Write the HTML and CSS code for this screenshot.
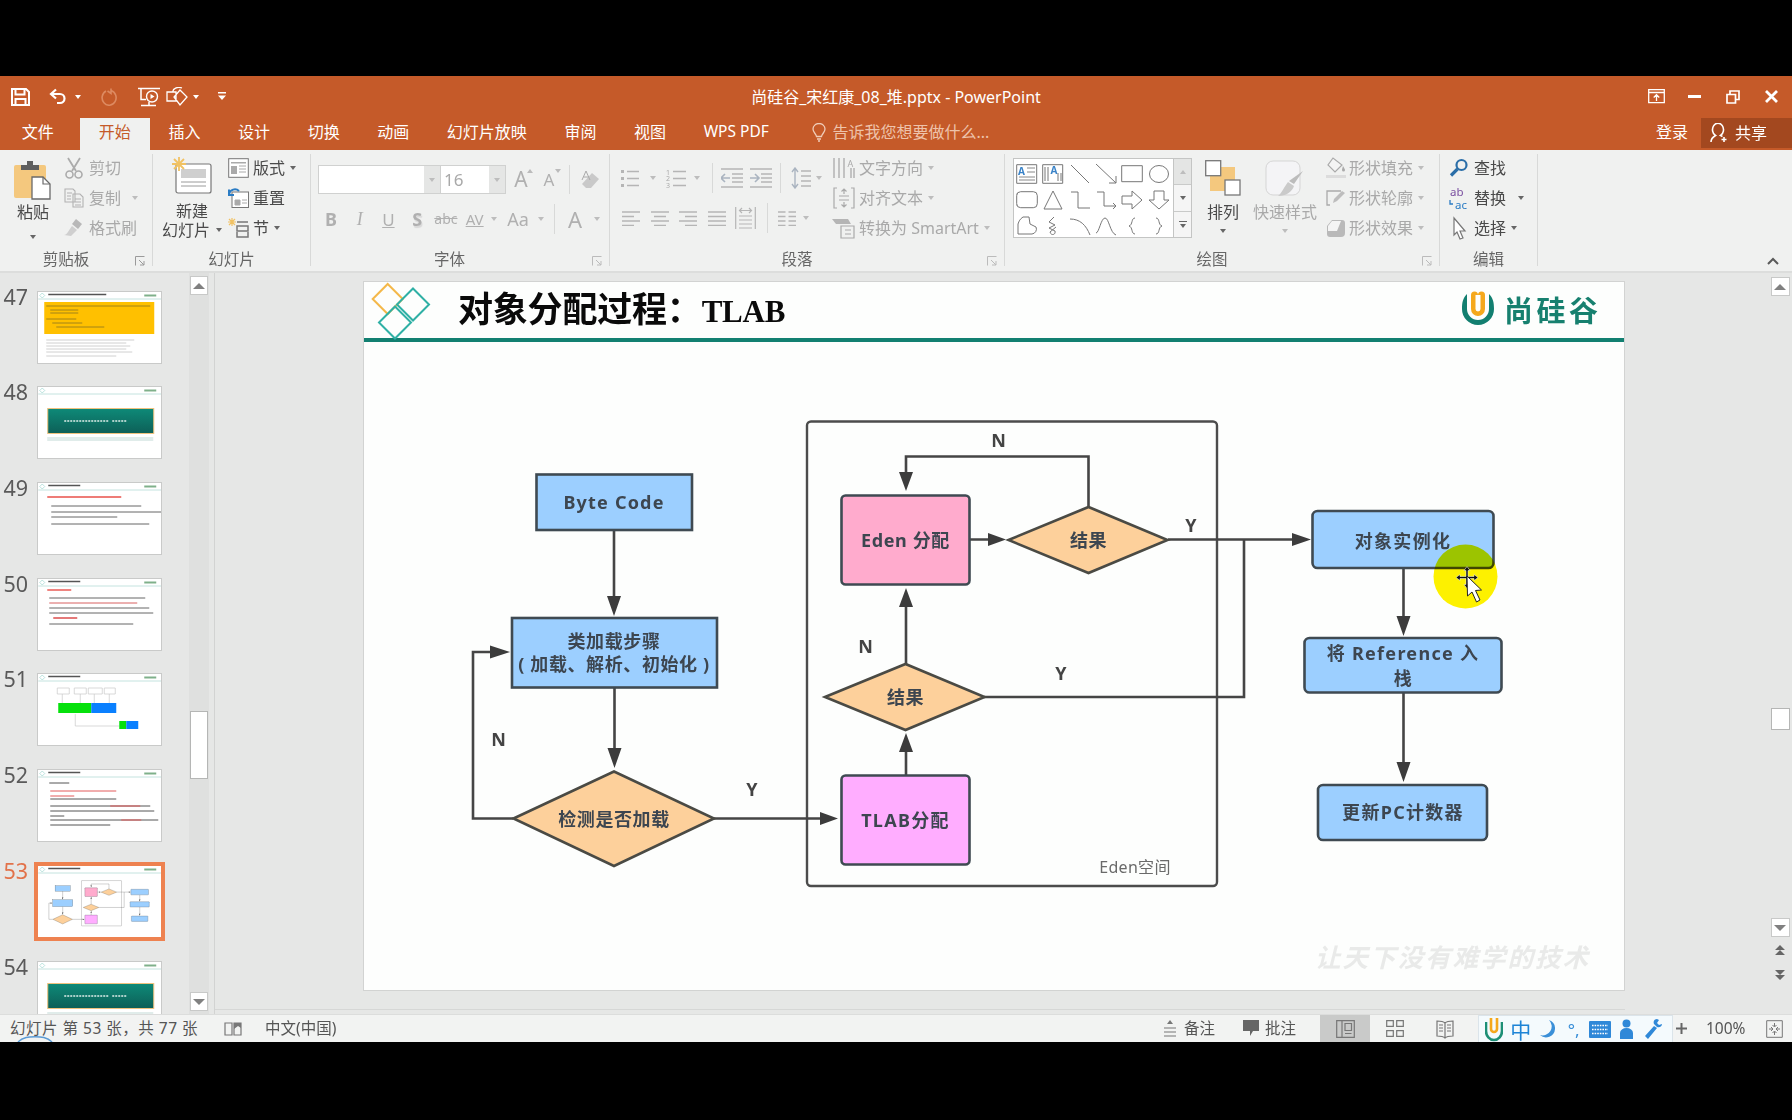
FILE: index.html
```html
<!DOCTYPE html>
<html lang="zh-CN">
<head>
<meta charset="utf-8">
<title>尚硅谷_宋红康_08_堆.pptx - PowerPoint</title>
<link rel="stylesheet" href="styles.css">
</head>
<body>
<div class="letterbox-top"></div>
<main class="app">
  <header class="titlebar">
    <div class="qat">
      <svg class="q-save" width="19" height="18" viewBox="0 0 19 18"><path d="M1 1h14l3 3v13H1zM4.500 1v5.500h9V1M4.500 17v-6h10v6" fill="none" stroke="#fff" stroke-width="2"/></svg>
      <svg class="q-undo" width="18" height="17" viewBox="0 0 18 17"><path d="M7 1.500 2 6l5 4.500M2.500 6H11a4.500 4.500 0 0 1 0 9H8" fill="none" stroke="#fff" stroke-width="2.200"/></svg>
      <span class="caret caret-white q-undo-caret"></span>
      <svg class="q-redo" width="17" height="18" viewBox="0 0 17 18"><path d="M10 2.500a7 7.500 0 1 1-5 .5M10 .5v5L6.500 3" fill="none" stroke="#dd8a61" stroke-width="1.600"/></svg>
      <svg class="q-show" width="22" height="20" viewBox="0 0 22 20"><path d="M0 1.500h22M3 1.500v11h5M3 18.500h15M11 15v3.500" fill="none" stroke="#fff" stroke-width="1.500"/><circle cx="14" cy="9.500" r="5.500" fill="none" stroke="#fff" stroke-width="1.400"/><path d="M12.500 7v5l4-2.500z" fill="#fff"/></svg>
      <svg class="q-shape" width="24" height="20" viewBox="0 0 24 20"><path d="M1 5h9v9H1zM14 3l7 7-7 8-6-8zM7 5a6 4 0 0 1 9-4" fill="none" stroke="#fff" stroke-width="1.300"/></svg>
      <span class="caret caret-white q-shape-caret"></span>
      <svg class="q-custom" width="8" height="11" viewBox="0 0 8 11"><path d="M0 1h8v1.500H0zM0 4.500h8L4 9z" fill="#fff"/></svg>
    </div>
    <div class="doc-title">尚硅谷_宋红康_08_堆.pptx - PowerPoint</div>
    <div class="win-controls">
      <span class="win-btn"><svg width="17" height="15" viewBox="0 0 17 15"><path d="M.7.700h15.600v13H.7zM.7 3.500h15.600M8.500 12V6M5.700 8.500l2.800-2.800 2.800 2.800" fill="none" stroke="#fff" stroke-width="1.300"/></svg></span>
      <span class="win-btn"><svg width="13" height="3" viewBox="0 0 13 3"><path d="M0 0h13v3H0z" fill="#fff"/></svg></span>
      <span class="win-btn"><svg width="14" height="14" viewBox="0 0 14 14"><path d="M1 4.500h8.500V13H1zM4 4.500V1h9v8.500H9.500" fill="none" stroke="#fff" stroke-width="1.700"/></svg></span>
      <span class="win-btn"><svg width="13" height="13" viewBox="0 0 13 13"><path d="m1 1 11 11M12 1 1 12" fill="none" stroke="#fff" stroke-width="2.800"/></svg></span>
    </div>
  </header>

  <nav class="tabs">
    <span class="tab tab-file">文件</span>
    <span class="tab tab-active">开始</span>
    <span class="tab">插入</span>
    <span class="tab">设计</span>
    <span class="tab">切换</span>
    <span class="tab">动画</span>
    <span class="tab">幻灯片放映</span>
    <span class="tab">审阅</span>
    <span class="tab">视图</span>
    <span class="tab tab-wps">WPS PDF</span>
    <span class="tell-me">
      <svg width="14" height="19" viewBox="0 0 14 19"><path d="M4.500 13.500C4 10.500 1 9.500 1 6a6 5.500 0 0 1 12 0c0 3.500-3 4.500-3.500 7.500zM5 16h4M6 18h2" fill="none" stroke="#f0cdb9" stroke-width="1.300"/></svg>
      告诉我您想要做什么...
    </span>
    <span class="login">登录</span>
    <span class="share">
      <svg width="18" height="20" viewBox="0 0 18 20"><path d="M1 19c0-4 2-5 4.500-6.500a5.500 6.500 0 1 1 5 0l2 1M14 14v5M11.500 16.500h5" fill="none" stroke="#fff" stroke-width="1.600"/></svg>
      共享
    </span>
  </nav>

  <section class="ribbon">
    <div class="group group-clip">
      <div class="group-body">
        <div class="bigbtn bigbtn-paste">
          <svg class="big-ico" width="38" height="40" viewBox="0 0 38 40"><rect x="0" y="5" width="32" height="33" rx="2" fill="#f4c87e"/><path d="M7 5h6V1h6v4h6v5H7z" fill="#5f5f5f"/><path d="M18 17h11l7 7v15H18z" fill="#fff" stroke="#6a6a6a" stroke-width="1.300"/><path d="M29 17v7h7" fill="none" stroke="#6a6a6a" stroke-width="1.200"/></svg>
          <span class="big-label">粘贴</span>
          <span class="caret caret-dark big-caret"></span>
        </div>
        <div class="smallcol smallcol-clip">
          <div class="smallbtn off"><svg class="ico" width="20" height="22" viewBox="0 0 20 22"><path d="m4 1 8 13M16 1 8 14" fill="none" stroke="#ababab" stroke-width="1.800"/><circle cx="5.500" cy="17.500" r="3.500" fill="none" stroke="#ababab" stroke-width="1.600"/><circle cx="14.500" cy="17.500" r="3.500" fill="none" stroke="#ababab" stroke-width="1.600"/></svg>剪切</div>
          <div class="smallbtn off"><svg class="ico" width="20" height="20" viewBox="0 0 20 20"><path d="M1 1h8l2 2v11H1zM9 6h7l3 3v10H9zM3 5h5M3 8h4M3 11h4M11 11h6M11 14h6M11 17h6" fill="none" stroke="#b2b2b2" stroke-width="1.100"/></svg>复制<span class="caret caret-off copy-caret"></span></div>
          <div class="smallbtn off"><svg class="ico" width="20" height="20" viewBox="0 0 20 20"><path d="m12 1 6 5-4 5-6-5z" fill="#b8b8b8"/><path d="m8 8 5 4-6 6-7-1c3 0 5-5 8-9z" fill="#cfcfcf"/></svg>格式刷</div>
        </div>
      </div>
      <div class="group-label"><span>剪贴板</span><svg class="launcher" width="10" height="10" viewBox="0 0 10 10"><path d="M.5 9.500V.5h9M4 4l5 5M9 5v4H5" fill="none" stroke="#9a9a9a"/></svg></div>
    </div>

    <div class="group group-slides">
      <div class="group-body">
        <div class="bigbtn bigbtn-new">
          <svg class="big-ico" width="40" height="37" viewBox="0 0 40 37"><rect x="4" y="7" width="35" height="29" rx="2" fill="#fff" stroke="#777" stroke-width="1.200"/><rect x="9" y="12" width="25" height="9" fill="#cfcfcf"/><path d="M9 25h25M9 29h25" stroke="#9a9a9a"/><path d="M7 0v14M0 7h14M2 2l10 10M12 2 2 12" stroke="#f1c263" stroke-width="1.800"/></svg>
          <span class="big-label">新建</span>
          <span class="big-label big-label-two">幻灯片<span class="caret caret-dark inline-caret"></span></span>
        </div>
        <div class="smallcol smallcol-slides">
          <div class="smallbtn"><svg class="ico" width="21" height="20" viewBox="0 0 21 20"><rect x=".7" y=".7" width="19.600" height="18.600" fill="#fff" stroke="#777"/><path d="M3 4h15v1.500H3zM3 8h6v8H3z" fill="#aaa"/><path d="M11 8h7M11 11h7M11 14h7" stroke="#aaa"/></svg>版式<span class="caret caret-dark"></span></div>
          <div class="smallbtn"><svg class="ico" width="21" height="20" viewBox="0 0 21 20"><rect x="4" y="4" width="16.500" height="15.500" fill="#fff" stroke="#777"/><path d="M7 12h5v5H7zM14 12h5M14 15h5" fill="#aaa" stroke="#aaa"/><path d="M1 6a6 6 0 0 1 10-3M1 1.500V7h5" fill="none" stroke="#2b7cc4" stroke-width="2"/></svg>重置</div>
          <div class="smallbtn"><svg class="ico" width="21" height="20" viewBox="0 0 21 20"><path d="M9 4h11M9 8h11v5H9zM9 14v5h11v-5" fill="none" stroke="#777" stroke-width="1.500"/><path d="M4 0v8M0 4h8M1 1l6 6M7 1 1 7" stroke="#f1c263" stroke-width="1.200"/></svg>节<span class="caret caret-dark"></span></div>
        </div>
      </div>
      <div class="group-label"><span>幻灯片</span></div>
    </div>

    <div class="group group-font">
      <div class="group-body group-body-col">
        <div class="font-row1">
          <div class="combo combo-font"><span class="combo-drop"><span class="caret caret-off"></span></span></div>
          <div class="combo combo-size"><span class="combo-val">16</span><span class="combo-drop"><span class="caret caret-off"></span></span></div>
          <span class="cell c28 fontsize fs-up">A</span>
          <span class="cell c28 fontsize fs-down">A</span>
          <span class="vsep sep-font1"></span>
          <span class="cell c28"><svg width="20" height="20" viewBox="0 0 20 20"><path d="M2 14 12 3l7 6-8 9H6z" fill="#c9c9c9"/><path d="M6 1 2 10M6 1l4 9M3.500 7h5" fill="none" stroke="#aaa"/></svg></span>
        </div>
        <div class="font-row2">
          <span class="cell c29 tb">B</span>
          <span class="cell c29 ti">I</span>
          <span class="cell c29 tu">U</span>
          <span class="cell c29 ts">S</span>
          <span class="cell c29 tabc">abc</span>
          <span class="cell c29 tav">AV</span>
          <span class="cell c9"><span class="caret caret-off"></span></span>
          <span class="cell c40 taa">Aa</span>
          <span class="cell c6"><span class="caret caret-off"></span></span>
          <span class="vsep sep-font2"></span>
          <span class="cell c30 tA">A</span>
          <span class="cell c14"><span class="caret caret-off"></span></span>
        </div>
      </div>
      <div class="group-label"><span>字体</span><svg class="launcher" width="10" height="10" viewBox="0 0 10 10"><path d="M.5 9.500V.5h9M4 4l5 5M9 5v4H5" fill="none" stroke="#bbb"/></svg></div>
    </div>

    <div class="group group-para">
      <div class="group-body">
        <div class="para-left">
          <div class="para-row1">
            <span class="cell c24"><svg width="18" height="20" viewBox="0 0 18 20"><path d="M0 2h3v3H0zM0 9h3v3H0zM0 16h3v3H0z" fill="#b5b5b5"/><path d="M6 3.500h12M6 10.500h12M6 17.500h12" stroke="#b5b5b5" stroke-width="1.300"/></svg></span>
            <span class="cell c22"><span class="caret caret-off"></span></span>
            <span class="cell c24"><svg class="ico-open" width="20" height="20" viewBox="0 0 20 20"><text x="0" y="6.500" class="num-ico">1</text><text x="0" y="13" class="num-ico">2</text><text x="0" y="19.500" class="num-ico">3</text><path d="M7 3.500h13M7 10.500h13M7 17.500h13" stroke="#b5b5b5" stroke-width="1.300"/></svg></span>
            <span class="cell c18"><span class="caret caret-off"></span></span>
            <span class="vsep sep-p1"></span>
            <span class="cell c24 ml7"><svg width="22" height="20" viewBox="0 0 22 20"><path d="M0 1h22M11 6h11M11 10h11M11 14h11M0 19h22" stroke="#b5b5b5" stroke-width="1.300"/><path d="M0 10h9M4 6l-4 4 4 4" fill="none" stroke="#aab4c0" stroke-width="1.600"/></svg></span>
            <span class="cell c24 ml5"><svg width="22" height="20" viewBox="0 0 22 20"><path d="M0 1h22M11 6h11M11 10h11M11 14h11M0 19h22" stroke="#b5b5b5" stroke-width="1.300"/><path d="M0 10h9M5 6l4 4-4 4" fill="none" stroke="#aab4c0" stroke-width="1.600"/></svg></span>
            <span class="vsep sep-p2"></span>
            <span class="cell c24 ml8"><svg width="20" height="22" viewBox="0 0 20 22"><path d="M4 1v20M1 5l3-4 3 4M1 17l3 4 3-4" fill="none" stroke="#aab4c0" stroke-width="1.400"/><path d="M10 4h10M10 9h10M10 14h10M10 19h10" stroke="#b5b5b5" stroke-width="1.300"/></svg></span>
            <span class="cell c12"><span class="caret caret-off"></span></span>
          </div>
          <div class="para-row2">
            <span class="cell c29"><svg width="18" height="15" viewBox="0 0 18 15"><path d="M0 1h18M0 5.500h12M0 10h18M0 14.500h12" stroke="#b5b5b5" stroke-width="1.300"/></svg></span>
            <span class="cell c29"><svg width="18" height="15" viewBox="0 0 18 15"><path d="M0 1h18M3 5.500h12M0 10h18M3 14.500h12" stroke="#b5b5b5" stroke-width="1.300"/></svg></span>
            <span class="cell c29"><svg width="18" height="15" viewBox="0 0 18 15"><path d="M0 1h18M6 5.500h12M0 10h18M6 14.500h12" stroke="#b5b5b5" stroke-width="1.300"/></svg></span>
            <span class="cell c29"><svg width="18" height="15" viewBox="0 0 18 15"><path d="M0 1h18M0 5.500h18M0 10h18M0 14.500h18" stroke="#b5b5b5" stroke-width="1.300"/></svg></span>
            <span class="cell c29"><svg width="21" height="24" viewBox="0 0 21 24"><path d="M.7 1v22M20.300 1v22M4 10h13M4 14h13M4 18h13M4 22h13M5 4.500h11M7 2 4.500 4.500 7 7M14 2l2.500 2.500L14 7" fill="none" stroke="#b5b5b5" stroke-width="1.200"/></svg></span>
            <span class="vsep sep-p3"></span>
            <span class="cell c24 ml7"><svg width="18" height="15" viewBox="0 0 18 15"><path d="M0 1h7.500M0 5.500h7.500M0 10h7.500M0 14.500h7.500M10.500 1H18M10.500 5.500H18M10.500 10H18M10.500 14.500H18" stroke="#b5b5b5" stroke-width="1.300"/></svg></span>
            <span class="cell c14"><span class="caret caret-off"></span></span>
          </div>
        </div>
        <div class="smallcol">
          <div class="smallbtn off"><svg class="ico" width="24" height="22" viewBox="0 0 24 22"><path d="M2 1v20M7 1v20M12 1v20M19 11v10M22 11v10" stroke="#aaa" stroke-width="1.300"/><text x="15.500" y="9.500" class="a-ico">A</text></svg>文字方向<span class="caret caret-off"></span></div>
          <div class="smallbtn off"><svg class="ico" width="24" height="22" viewBox="0 0 24 22"><path d="M5 1H2v20h3M19 1h3v20h-3M7 9h10M7 13h10M12 2v5M9.500 4.500 12 2l2.500 2.500M12 15v5M9.500 17.500 12 20l2.500-2.500" fill="none" stroke="#aaa" stroke-width="1.200"/></svg>对齐文本<span class="caret caret-off"></span></div>
          <div class="smallbtn off"><svg class="ico" width="24" height="22" viewBox="0 0 24 22"><path d="M0 2h16l3 5H4z" fill="#b5b5b5"/><path d="M9 9h13v12H9zM13 13h6M13 17h6" fill="none" stroke="#aaa" stroke-width="1.200"/></svg>转换为 SmartArt<span class="caret caret-off"></span></div>
        </div>
      </div>
      <div class="group-label"><span>段落</span><svg class="launcher" width="10" height="10" viewBox="0 0 10 10"><path d="M.5 9.500V.5h9M4 4l5 5M9 5v4H5" fill="none" stroke="#bbb"/></svg></div>
    </div>

    <div class="group group-draw">
      <div class="group-body">
        <div class="gallery">
          <div class="gallery-grid">
            <svg viewBox="0 0 22 20"><path d="M.7.700h20v18.600H.7z" fill="none" stroke="#777"/><text x="2" y="11" class="a-blue">A</text><path d="M11 4h8M11 8h8M3 13h16M3 16h16" stroke="#888"/></svg>
            <svg viewBox="0 0 22 20"><path d="M.7.700h20v18.600H.7zM3 3v14M6 3v14M16 9v8M19 9v8" fill="none" stroke="#777"/><text x="8.500" y="10" class="a-blue">A</text></svg>
            <svg viewBox="0 0 22 20"><path d="M2 1l18 18" stroke="#777"/></svg>
            <svg viewBox="0 0 22 20"><path d="M1 0l20 19M21 12v7h-7" fill="none" stroke="#777"/></svg>
            <svg viewBox="0 0 22 20"><path d="M.7 1.700h20.600v16H.7z" fill="none" stroke="#777"/></svg>
            <svg viewBox="0 0 22 20"><ellipse cx="11" cy="10" rx="9.500" ry="8.500" fill="none" stroke="#777"/></svg>
            <svg viewBox="0 0 22 20"><rect x=".7" y="1.700" width="20.600" height="16" rx="4" fill="none" stroke="#777"/></svg>
            <svg viewBox="0 0 22 20"><path d="M11 1 20 19H2z" fill="none" stroke="#777"/></svg>
            <svg viewBox="0 0 22 20"><path d="M2 2h7v16h12" fill="none" stroke="#777"/></svg>
            <svg viewBox="0 0 22 20"><path d="M2 2h7v14h12M18 13l3 3-3 3" fill="none" stroke="#777"/></svg>
            <svg viewBox="0 0 22 20"><path d="M1 6h10V1l10 9-10 9v-5H1z" fill="none" stroke="#777"/></svg>
            <svg viewBox="0 0 22 20"><path d="M6 1h10v9h5L11 19 1 10h5z" fill="none" stroke="#777"/></svg>
            <svg viewBox="0 0 22 20"><path d="M7 1c-3 2-4 4-5 7v10h14a5 5 0 0 0 4-7l-6-3-1-7z" fill="none" stroke="#777"/></svg>
            <svg viewBox="0 0 22 20"><path d="M12 1 7 6l6 3-6 3 6 3c1 4-4 5-5 1l6-5" fill="none" stroke="#777"/></svg>
            <svg viewBox="0 0 22 20"><path d="M1 3c10 0 16 6 20 16" fill="none" stroke="#777"/></svg>
            <svg viewBox="0 0 22 20"><path d="M1 17c3 0 5-15 9-15s5 15 11 17" fill="none" stroke="#777"/></svg>
            <svg viewBox="0 0 22 20"><path d="M14 2c-4 0-2 7-6 8 4 1 2 8 6 8" fill="none" stroke="#777"/></svg>
            <svg viewBox="0 0 22 20"><path d="M8 2c4 0 2 7 6 8-4 1-2 8-6 8" fill="none" stroke="#777"/></svg>
          </div>
          <div class="gallery-scroll">
            <span class="gs gs-up"><span class="caret caret-off caret-up"></span></span>
            <span class="gs"><span class="caret caret-dark"></span></span>
            <span class="gs gs-more"><span class="gs-bar"></span><span class="caret caret-dark"></span></span>
          </div>
        </div>
        <div class="bigbtn bigbtn-arrange">
          <svg class="big-ico" width="36" height="36" viewBox="0 0 36 36"><rect x="5" y="7" width="25" height="24" fill="#f4c87e"/><rect x=".7" y=".7" width="15" height="15" fill="#fff" stroke="#777" stroke-width="1.300"/><rect x="20" y="20" width="15" height="15" fill="#fff" stroke="#777" stroke-width="1.300"/></svg>
          <span class="big-label">排列</span>
          <span class="caret caret-dark big-caret"></span>
        </div>
        <div class="bigbtn bigbtn-style off">
          <svg class="big-ico" width="40" height="38" viewBox="0 0 40 38"><rect x="1" y="1" width="34" height="34" rx="7" fill="#f4f4f6" stroke="#d5d5d5"/><path d="M38 11 29 24l-5-3z" fill="#bcbcbc"/><path d="m23 22 6 4c-2 6-8 10-16 10 4-3 6-9 10-14z" fill="#cacaca"/></svg>
          <span class="big-label">快速样式</span>
          <span class="caret caret-off big-caret"></span>
        </div>
        <div class="smallcol smallcol-shape">
          <div class="smallbtn off"><svg class="ico" width="20" height="22" viewBox="0 0 20 22"><path d="M7 1 2 8l7 7 7-7z" fill="#f4f4f4" stroke="#aaa" stroke-width="1.200"/><path d="M17 9c1 2 2 3 2 4a1.500 1.500 0 0 1-3 0c0-1 .5-2 1-4z" fill="#aaa"/><path d="M0 18h20v3H0z" fill="#dcdcdc"/></svg>形状填充<span class="caret caret-off"></span></div>
          <div class="smallbtn off"><svg class="ico" width="20" height="20" viewBox="0 0 20 20"><path d="M15 3H1v14h3" fill="none" stroke="#aaa" stroke-width="1.300"/><path d="m16 3 3 2-8 8-4 2 1-4z" fill="#bdbdbd"/></svg>形状轮廓<span class="caret caret-off"></span></div>
          <div class="smallbtn off"><svg class="ico" width="20" height="20" viewBox="0 0 20 20"><path d="M6 2h10a3 3 0 0 1 3 3v10a4 4 0 0 1-4 4H4a3 3 0 0 1-3-3v-8z" fill="#b9b9b9"/><path d="M6 3h9l-4 10H2V8z" fill="#f4f4f4"/></svg>形状效果<span class="caret caret-off"></span></div>
        </div>
      </div>
      <div class="group-label"><span>绘图</span><svg class="launcher" width="10" height="10" viewBox="0 0 10 10"><path d="M.5 9.500V.5h9M4 4l5 5M9 5v4H5" fill="none" stroke="#bbb"/></svg></div>
    </div>

    <div class="group group-edit">
      <div class="group-body">
        <div class="smallcol">
          <div class="smallbtn"><svg class="ico" width="20" height="20" viewBox="0 0 20 20"><circle cx="12.500" cy="7" r="5" fill="none" stroke="#2b6ea8" stroke-width="2.200"/><path d="M8.500 11 2 17.500" stroke="#2b6ea8" stroke-width="3.200"/></svg>查找</div>
          <div class="smallbtn"><svg class="ico" width="20" height="24" viewBox="0 0 20 24"><text x="1" y="10" class="ab-ico">ab</text><text x="6" y="23" class="ac-ico">ac</text><path d="M1 14v4h3" fill="none" stroke="#2b7cc4" stroke-width="1.300"/></svg>替换<span class="caret caret-dark rep-caret"></span></div>
          <div class="smallbtn"><svg class="ico" width="20" height="22" viewBox="0 0 20 22"><path d="m5 1 11 13h-5l3 7-3 1-3-7-3 3z" fill="#fff" stroke="#777" stroke-width="1.200"/></svg>选择<span class="caret caret-dark"></span></div>
        </div>
      </div>
      <div class="group-label"><span>编辑</span></div>
    </div>
    <svg class="collapse" width="12" height="8" viewBox="0 0 12 8"><path d="m1 7 5-5 5 5" fill="none" stroke="#5a5a5a" stroke-width="2"/></svg>
  </section>

  <section class="workspace">
    <aside class="pane">
      <div class="thumb-list">
        <div class="thumb-row"><span class="num">47</span>
          <svg class="thumb" viewBox="0 0 123 71"><use href="#thumb-head"/><path d="M10 2.500h58" stroke="#555" stroke-width="1.500"/><rect x="6" y="10" width="110" height="32" fill="#ffc000"/><path d="M8 14h104M12 18h28M12 21h28M8 27h30M14 31h30M18 35h48" stroke="#8a7420" stroke-width=".8"/><path d="M8 48h88M8 51h80M8 54h84M8 57h80M8 60h86M8 64h70" stroke="#c4c4c4" stroke-width=".8"/></svg></div>
        <div class="thumb-row"><span class="num">48</span>
          <svg class="thumb" viewBox="0 0 123 71"><use href="#thumb-head"/><use href="#teal-card"/></svg></div>
        <div class="thumb-row"><span class="num">49</span>
          <svg class="thumb" viewBox="0 0 123 71"><use href="#thumb-head"/><path d="M10 2.500h32" stroke="#555" stroke-width="1.500"/><path d="M9 14h74" stroke="#e9504a" stroke-width="1.400"/><path d="M13 23h90M13 29h110M13 34h66M13 41h98" stroke="#666" stroke-width="1"/></svg></div>
        <div class="thumb-row"><span class="num">50</span>
          <svg class="thumb" viewBox="0 0 123 71"><use href="#thumb-head"/><path d="M10 2.500h32" stroke="#555" stroke-width="1.500"/><path d="M9 11h24" stroke="#e9504a" stroke-width="1.400"/><path d="M11 19h96M11 29h100M11 34h104M11 45h84" stroke="#666" stroke-width="1"/><path d="M11 24h88" stroke="#d86060" stroke-width="1"/><path d="M15 39h24" stroke="#d84040" stroke-width="1.400"/></svg></div>
        <div class="thumb-row"><span class="num">51</span>
          <svg class="thumb" viewBox="0 0 123 71"><use href="#thumb-head"/><path d="M10 2.500h32" stroke="#555" stroke-width="1.500"/><path d="M19 14h12v6H19zM36 14h12v6H36zM50 14h14v6H50zM66 14h11v6H66zM24 20v9M42 20v9M56 20v9M71 20v9M37 40v12h44" fill="none" stroke="#c8c8c8" stroke-width=".7"/><rect x="20" y="29" width="33" height="10" fill="#06e10c"/><rect x="53" y="29" width="25" height="10" fill="#0a80ff"/><rect x="81" y="47" width="7" height="8" fill="#06e10c"/><rect x="88" y="47" width="12" height="8" fill="#0a80ff"/></svg></div>
        <div class="thumb-row"><span class="num">52</span>
          <svg class="thumb" viewBox="0 0 123 71"><use href="#thumb-head"/><path d="M10 2.500h32" stroke="#555" stroke-width="1.500"/><path d="M11 13h20M12 29h66M12 36h100M12 41h104M12 46h14M12 50h108M12 55h60" stroke="#555" stroke-width="1"/><path d="M12 21h66M12 26h24M72 36h30M83 50h20" stroke="#e25a5a" stroke-width="1"/></svg></div>
        <div class="thumb-row thumb-row-on"><span class="num">53</span>
          <svg class="thumb thumb-on" viewBox="0 0 123 71"><use href="#thumb-head"/><path d="M10 2.500h32" stroke="#555" stroke-width="1.500"/><svg x="0" y="0" width="123" height="71" viewBox="364 282 1260 708"><use href="#flow-shapes"/></svg></svg></div>
        <div class="thumb-row"><span class="num">54</span>
          <svg class="thumb" viewBox="0 0 123 71"><use href="#thumb-head"/><use href="#teal-card"/></svg></div>
      </div>
      <div class="pane-scroll">
        <span class="sbtn sbtn-up"><span class="caret caret-grey caret-up"></span></span>
        <span class="sthumb"></span>
        <span class="sbtn sbtn-down"><span class="caret caret-grey"></span></span>
      </div>
      <svg class="defs" width="0" height="0" aria-hidden="true">
        <defs>
          <linearGradient id="teal" x1="0" y1="0" x2="0" y2="1"><stop offset="0" stop-color="#0e8a78"/><stop offset="1" stop-color="#0d5f57"/></linearGradient>
          <g id="thumb-head">
            <path d="m4 1 2.500 2.500L4 6 1.500 3.500z" fill="none" stroke="#8fd0c8" stroke-width=".6"/>
            <path d="M0 7h123" stroke="#c4e3df" stroke-width="1"/>
            <path d="M106 3.500h12" stroke="#7fb08a" stroke-width="2"/>
          </g>
          <g id="teal-card">
            <rect x="9" y="50" width="106" height="4" fill="#e0ecea"/>
            <rect x="9.500" y="21.500" width="106" height="25" fill="url(#teal)" stroke="#eec27e"/>
            <path d="M26 34h44M74 34h14" stroke="#dfeeea" stroke-width="1.300" stroke-dasharray="2 1"/>
          </g>
        </defs>
      </svg>
    </aside>

    <div class="stage">
      <article class="slide">
        <header class="slide-head">
          <svg class="slide-mark" width="60" height="60" viewBox="0 0 60 60"><path d="m22.700 2 15 15-15 15-15-15z" fill="none" stroke="#f4b84a" stroke-width="2"/><path d="m48 6.500 16 16-16 16-16-16zM30 24.500l16 16-16 16-16-16z" fill="none" stroke="#2fb0a5" stroke-width="2"/></svg>
          <h1 class="slide-title">对象分配过程<span class="slide-title-colon">：</span><span class="slide-title-en">TLAB</span></h1>
          <div class="brand">
            <svg width="36" height="36" viewBox="0 0 36 36"><path d="M2 18a16 16 0 0 0 32 0c0-7-1-11-5-15v15a11 11 0 0 1-22 0V3C3 7 2 11 2 18z" fill="#127f70"/><path d="M11 4a3.500 3.500 0 0 1 7 0v14h0V4a3.500 3.500 0 0 1 7 0v14a7 7 0 0 1-14 0zM15.500 4v14a2.500 2.500 0 0 0 5 0V4z" fill="#f5a81c" fill-rule="evenodd"/></svg>
            <span class="brand-text">尚硅谷</span>
          </div>
        </header>
        <div class="slide-canvas">
          <svg class="flow" width="1260" height="648" viewBox="364 342 1260 648">
            <g id="flow-shapes">
              <rect class="outer" x="807" y="421.500" width="410" height="464.500" rx="4"/>
              <g class="wire">
                <path d="M614 530v70M614.500 687v68M513 818.500H473V652h20M713 818.500H824M906 664v-60M906 775v-26M1088.500 507v-50.500H906v20M969 539.500h20M1168 539.500h125M984 697h260V540M1403.500 568v50M1403.500 692v74"/>
              </g>
              <g class="head">
                <path d="m614 616-7-20h14zM614.500 768l-7-20h14zM510 652l-20-6.500v13zM838 818.500l-18-6.500v13zM906 588l-7 19h14zM906 733l-7 19h14zM906 491l-7-19h14zM1006 539.500l-18-6.500v13zM1311 539.500l-19-6.500v13zM1403.500 636l-7-20h14zM1403.500 782l-7-20h14z"/>
              </g>
              <rect class="box blue" x="536.500" y="474.500" width="155.500" height="55.500"/>
              <rect class="box blue" x="512" y="618" width="205" height="69.500"/>
              <path class="box peach" d="M513.500 818.500 614 771.500l100 47-100 47.500z"/>
              <rect class="box pink" x="841.500" y="495.500" width="128" height="89" rx="4"/>
              <rect class="box lilac" x="841.500" y="775.500" width="128" height="89" rx="4"/>
              <path class="box peach" d="M825 697l80.500-33 79 33-79 33z"/>
              <path class="box peach" d="M1008.500 540l80-33 79 33-79 33z"/>
              <rect class="box blue" x="1312.500" y="511" width="181" height="57" rx="5"/>
              <rect class="box blue" x="1304.500" y="638" width="197" height="54.500" rx="5"/>
              <rect class="box blue" x="1318" y="785" width="169" height="55" rx="5"/>
            </g>
            <g class="labels">
              <text x="614" y="502">Byte Code</text>
              <text class="cjk" x="614" y="641">类加载步骤</text>
              <text class="cjk" x="614" y="664">( 加载、解析、初始化 )</text>
              <text class="cjk" x="614" y="819">检测是否加载</text>
              <text class="cjk" x="905.500" y="540">Eden 分配</text>
              <text class="cjk wide" x="905.500" y="820">TLAB分配</text>
              <text class="cjk" x="905.500" y="697">结果</text>
              <text class="cjk" x="1088.500" y="540">结果</text>
              <text class="cjk wide" x="1403" y="541">对象实例化</text>
              <text class="cjk wide" x="1403" y="653">将 Reference 入</text>
              <text class="cjk" x="1403" y="678">栈</text>
              <text class="cjk wide" x="1403" y="812">更新PC计数器</text>
              <text class="mark" x="498.500" y="739">N</text>
              <text class="mark" x="752" y="789">Y</text>
              <text class="mark" x="998.500" y="440">N</text>
              <text class="mark" x="865.500" y="646">N</text>
              <text class="mark" x="1191" y="525">Y</text>
              <text class="mark" x="1061" y="673">Y</text>
              <text class="eden" x="1135" y="867">Eden空间</text>
            </g>
            <circle class="spot" cx="1465.500" cy="576.500" r="32"/>
            <g class="pointer">
              <path class="move" d="M1467 566.500l-3 4h2v6h-6v-2l-4 3 4 3v-2h6v6h-2l3 4 3-4h-2v-6h6v2l4-3-4-3v2h-6v-6h2z"/>
              <path class="arrow" d="m1467 576 .5 20 4.500-4 4.500 10 3.500-2-4.500-9.500 6-.5z"/>
            </g>
          </svg>
          <div class="watermark">让天下没有难学的技术</div>
        </div>
      </article>
      <div class="stage-rule"></div>
    </div>

    <div class="vscroll">
      <span class="sbtn sbtn-up"><span class="caret caret-grey caret-up"></span></span>
      <span class="sthumb sthumb-main"></span>
      <span class="sbtn sbtn-down2"><span class="caret caret-grey"></span></span>
      <svg class="page-prev" width="10" height="11" viewBox="0 0 10 11"><path d="M5 0 10 5H0zM5 5l5 5H0z" fill="#666"/></svg>
      <svg class="page-next" width="10" height="11" viewBox="0 0 10 11"><path d="M5 11 0 6h10zM5 6 0 1h10z" fill="#666"/></svg>
    </div>
  </section>

  <footer class="status">
    <span class="st-count">幻灯片 第 53 张，共 77 张</span>
    <svg class="st-proof" width="18" height="16" viewBox="0 0 18 16"><path d="M1 2h7v12H1zM10 2h7v12h-7z" fill="none" stroke="#777" stroke-width="1.200"/><path d="M10 2h7v5l-3-2-4 3z" fill="#777"/></svg>
    <span class="st-lang">中文(中国)</span>
    <div class="st-right">
      <span class="st-btn st-notes"><svg width="14" height="18" viewBox="0 0 14 18"><path d="M7 0 10 4H4z" fill="#777"/><path d="M1 8h12M1 12h12M1 16h12" stroke="#777" stroke-width="1.200"/></svg>备注</span>
      <span class="st-btn st-comments"><svg width="16" height="17" viewBox="0 0 16 17"><path d="M0 0h16v11h-6l-3 5v-5H0z" fill="#666"/></svg>批注</span>
      <span class="view view-on"><svg width="19" height="18" viewBox="0 0 19 18"><path d="M.7.700h17.600v16.600H.7zM6 .7v16.600M9 3.500h6.500v7H9zM9 13.500h6.500" fill="none" stroke="#777" stroke-width="1.200"/></svg></span>
      <span class="view view-grid"><svg width="18" height="17" viewBox="0 0 18 17"><path d="M.7.700h6.600v5.600H.7zM10.700.7h6.600v5.600h-6.600zM.7 10.700h6.600v5.600H.7zM10.700 10.700h6.600v5.600h-6.600z" fill="none" stroke="#777" stroke-width="1.200"/></svg></span>
      <span class="view view-read"><svg width="18" height="20" viewBox="0 0 18 20"><path d="M1 2c3 0 6 0 8 2 2-2 5-2 8-2v15c-3 0-6 0-8 2-2-2-5-2-8-2zM9 4v15M3 6h4M3 9h4M3 12h4M11 6h4M11 9h4M11 12h4" fill="none" stroke="#777" stroke-width="1.200"/></svg></span>
      <div class="ime">
        <span class="ime-cell"><svg width="18" height="26" viewBox="0 0 18 26"><path d="M1 6v9a8 9 0 0 0 16 0V6" fill="none" stroke="#1d8f76" stroke-width="2.600"/><path d="M6 2v11a3 3 0 0 0 6 0V2" fill="none" stroke="#f5a81c" stroke-width="2.600"/></svg></span>
        <span class="ime-cell ime-zh">中</span>
        <span class="ime-cell"><svg width="16" height="18" viewBox="0 0 16 18"><path d="M10 0a9 9 0 0 1-9 15 9 9 0 0 0 15-6 9 9 0 0 0-6-9z" fill="#3a8fd8"/></svg></span>
        <span class="ime-cell ime-punct">°,</span>
        <span class="ime-cell"><svg width="22" height="17" viewBox="0 0 22 17"><rect width="22" height="17" rx="1" fill="#2f88d8"/><path d="M3 4.500h16M3 8.500h16M3 12.500h16" stroke="#fff" stroke-width="1.600" stroke-dasharray="1.600 1"/></svg></span>
        <span class="ime-cell"><svg width="15" height="20" viewBox="0 0 15 20"><circle cx="7.500" cy="4.500" r="4" fill="#2f88d8"/><path d="M1 20v-6a6.500 5 0 0 1 13 0v6z" fill="#2f88d8"/></svg></span>
        <span class="ime-cell"><svg width="17" height="20" viewBox="0 0 17 20"><path d="M12 0c-3 0-4 3-3 5l3 3c3 1 5-1 5-3l-3 1-2-2 2-3zM9 7l3 2-9 11-3-3z" fill="#2f88d8"/></svg></span>
      </div>
      <svg class="st-plus" width="11" height="11" viewBox="0 0 11 11"><path d="M5.500 0v11M0 5.500h11" stroke="#666" stroke-width="2"/></svg>
      <span class="st-zoom">100%</span>
      <svg class="st-fit" width="17" height="18" viewBox="0 0 17 18"><path d="M.7.700h15.600v16.600H.7zM8.500 3v3.500M6.500 5 8.500 7l2-2M8.500 15v-3.500M6.500 13l2-2 2 2M3 9h3M5 7l2 2-2 2M14 9h-3M12 7l-2 2 2 2" fill="none" stroke="#777" stroke-width="1"/></svg>
    </div>
    <svg class="st-arc" width="36" height="6" viewBox="0 0 36 6"><path d="M1 6C6 1 12 .8 18 .8S30 1 35 6" fill="none" stroke="#5b9bd5" stroke-width="1.500"/></svg>
  </footer>
</main>
</body>
</html>
```
FILE: styles.css
```css
* { box-sizing: border-box; }
html, body { margin: 0; padding: 0; }
body {
  width: 1792px;
  height: 1120px;
  overflow: hidden;
  background: #000;
  font-family: "Noto Sans", "Noto Sans CJK SC", sans-serif;
  font-size: 16px;
  line-height: 1;
  color: #4a4a4a;
}
svg { display: block; flex: none; }
.letterbox-top { height: 76px; }
.app { height: 966px; display: flex; flex-direction: column; position: relative; filter: blur(.35px); }

/* carets */
.caret { display: inline-block; width: 0; height: 0; border-left: 3.500px solid transparent; border-right: 3.500px solid transparent; border-top: 4px solid #666; flex: none; }
.caret-white { border-top-color: #fff; }
.caret-dark { border-top-color: #666; }
.caret-off { border-top-color: #bdbdbd; }
.caret-grey { border-left-width: 6px; border-right-width: 6px; border-top: 6px solid #808080; }
.caret-up { transform: rotate(180deg); }

/* title bar */
.titlebar { height: 42px; background: #c55a29; display: grid; grid-template-columns: 1fr auto 1fr; align-items: center; color: #fff; padding-bottom: 1px; }
.qat { display: flex; align-items: center; padding-left: 11px; }
.q-undo { margin-left: 19px; }
.q-undo-caret { margin-left: 8px; }
.q-redo { margin-left: 20px; }
.q-show { margin-left: 20px; }
.q-shape { margin-left: 6px; }
.q-shape-caret { margin-left: 3px; }
.q-custom { margin-left: 19px; }
.doc-title { font-size: 16px; color: #fff; }
.win-controls { display: flex; justify-content: flex-end; padding-right: 1px; }
.win-btn { width: 38.500px; display: flex; justify-content: center; align-items: center; }

/* tabs */
.tabs { height: 32px; background: #c55a29; display: flex; align-items: stretch; padding-left: 3px; color: #fff; font-size: 16px; }
.tab { padding: 0 18.800px 4px; display: flex; align-items: center; }
.tab-file { margin-right: 7.400px; }
.tab-active { background: #f0f1f0; color: #c55a29; }
.tab-wps { font-size: 15.500px; }
.tell-me { display: flex; align-items: center; gap: 7px; margin-left: 24px; color: #eec3ab; padding-bottom: 4px; font-size: 16px; }
.login { margin-left: auto; margin-right: 13px; display: flex; align-items: center; padding-bottom: 4px; }
.share { width: 91px; height: 30px; background: #a3481f; display: flex; align-items: center; gap: 7px; padding-left: 9px; }

/* ribbon */
.ribbon { height: 123px; background: #f0f1f0; border-bottom: 2px solid #dcdddc; display: flex; padding-top: 4px; position: relative; }
.group { height: 112px; display: flex; flex-direction: column; border-right: 1px solid #d8d9d8; flex: none; }
.group-clip { width: 153px; }
.group-slides { width: 158px; padding-left: 7px; }
.group-font { width: 299px; padding-left: 7px; }
.group-para { width: 395px; padding-left: 8px; }
.group-draw { width: 435px; padding-left: 8px; }
.group-edit { width: 98px; padding-left: 9px; }
.group-body { height: 90px; display: flex; }
.group-body-col { flex-direction: column; }
.group-label { height: 22px; padding-top: 8px; line-height: 14px; display: flex; align-items: center; color: #666; font-size: 15.500px; }
.group-label span { flex: 1; text-align: center; }
.group-slides .group-label span { margin-left: -7px; }
.group-edit .group-label span { margin-left: -9px; }
.group-font .group-label span, .group-para .group-label span, .group-draw .group-label span { margin-left: -8px; }
.launcher { margin: 4px 7px 0 3px; }
.bigbtn { display: flex; flex-direction: column; align-items: center; color: #4a4a4a; }
.big-ico { margin-top: 6px; }
.big-label { line-height: 20px; font-size: 16px; white-space: nowrap; }
.big-label-two { display: flex; align-items: center; gap: 4px; }
.inline-caret { margin-left: 2px; }
.big-caret { margin-top: 9px; }
.bigbtn-paste { width: 50px; margin-left: 8px; }
.bigbtn-paste .big-label { margin-top: 0; line-height: 24px; }
.bigbtn-paste .big-caret { margin-top: 11px; }
.bigbtn-new { width: 64px; }
.bigbtn-new .big-ico { margin-top: 3px; }
.bigbtn-new .big-label { margin-top: 7px; line-height: 20px; }
.bigbtn-new .big-label-two { margin: -1px -5px 0; }
.bigbtn-arrange { width: 50px; margin-left: 6px; }
.bigbtn-style { width: 72px; margin-left: 1px; color: #a9a9a9; }
.bigbtn-arrange .big-label, .bigbtn-style .big-label { margin-top: 6px; line-height: 20px; }
.bigbtn-style .big-ico { margin-bottom: -2px; }
.bigbtn-arrange .big-caret, .bigbtn-style .big-caret { margin-top: 7px; }
.smallcol { display: flex; flex-direction: column; margin-top: -1px; }
.smallcol-clip { margin-left: 6px; }
.smallcol-slides { margin-left: 4px; }
.smallcol-shape { margin-left: 5px; }
.smallbtn { height: 30px; display: flex; align-items: center; white-space: nowrap; font-size: 16px; color: #4a4a4a; }
.smallbtn .ico { margin-right: 4px; overflow: visible; }
.smallbtn .caret { margin-left: 5px; }
.smallcol-clip .ico { margin-right: 5px; }
.group-edit .ico { margin-right: 5px; }
.group-para .ico, .smallcol-shape .ico { margin-right: 3px; }
.ico-open { overflow: visible; }
.rep-caret.caret { margin-left: 12px; }
.off { color: #a9a9a9; }
.smallbtn.off { color: #a9a9a9; }
.copy-caret.caret { margin-left: 11px; }
.collapse { position: absolute; right: 13px; bottom: 6px; }

.cell { display: flex; align-items: center; justify-content: center; flex: none; color: #b0b0b0; }
.c6 { width: 6px; } .c9 { width: 9px; } .c12 { width: 12px; } .c14 { width: 14px; } .c18 { width: 18px; } .c22 { width: 22px; }
.c24 { width: 24px; } .c28 { width: 28px; } .c29 { width: 28.750px; } .c30 { width: 30px; } .c40 { width: 40px; }
.ml5 { margin-left: 5px; } .ml7 { margin-left: 7px; } .ml8 { margin-left: 8px; }
.vsep { width: 1px; background: #d8d9d8; flex: none; }

.font-row1 { display: flex; height: 29px; margin-top: 11px; }
.font-row2 { display: flex; height: 30px; margin-top: 10px; margin-left: -1.500px; }
.combo { height: 29px; display: flex; background: #fff; border: 1px solid #d0d1d0; justify-content: space-between; align-items: stretch; }
.combo-font { width: 123px; justify-content: flex-end; }
.combo-size { width: 66px; margin-left: -1px; margin-right: 1px; }
.combo-val { color: #a9a9a9; padding: 5px 0 0 3px; font-size: 17px; }
.combo-drop { width: 16px; background: #e5e6e5; display: flex; align-items: center; justify-content: center; }
.fontsize { font-size: 21px; position: relative; }
.fs-down { font-size: 17px; }
.fontsize::after { content: ""; position: absolute; top: 4px; right: 2px; border-left: 3px solid transparent; border-right: 3px solid transparent; }
.fs-up::after { border-bottom: 4px solid #bbb; }
.fs-down::after { border-top: 4px solid #bbb; }
.sep-font1 { margin-left: 6px; margin-right: 6px; }
.sep-font2 { margin-left: 10px; margin-right: 5px; }
.tb { font-weight: 700; font-size: 18px; }
.ti { font-style: italic; font-size: 18px; font-family: "Liberation Serif", serif; }
.tu { text-decoration: underline; font-size: 17px; }
.ts { font-size: 18px; font-weight: 700; text-shadow: 1px 2px 1px #d8d8d8; }
.tabc { font-size: 14px; text-decoration: line-through; }
.tav { font-size: 15px; text-decoration: underline; }
.taa { font-size: 18px; }
.tA { font-size: 22px; }

.para-left { width: 214px; }
.para-row1 { display: flex; height: 30px; margin-top: 9px; }
.para-row2 { display: flex; height: 30px; margin-top: 10px; margin-left: -1.500px; }
.sep-p1 { margin-left: 6px; }
.sep-p2 { margin-left: 7px; }
.sep-p3 { margin-left: 6.500px; }
.num-ico { font-size: 7px; fill: #aaa; font-family: "Noto Sans", sans-serif; }
.a-ico { font-size: 9px; fill: #aaa; font-family: "Noto Sans", sans-serif; }
.a-blue { font-size: 10px; font-weight: 700; fill: #3a83c8; font-family: "Noto Sans", sans-serif; }
.ab-ico { font-size: 11.500px; fill: #7a4fa0; font-family: "Noto Sans", sans-serif; }
.ac-ico { font-size: 11.500px; fill: #2b7cc4; font-family: "Noto Sans", sans-serif; }

.gallery { width: 179px; height: 80px; margin-top: 4px; display: flex; border: 1px solid #c4c5c4; background: #fff; flex: none; }
.gallery-grid { width: 160px; padding: 2px 0 0 0; display: grid; grid-template-columns: repeat(6, 26.300px); grid-auto-rows: 26px; align-items: center; justify-items: center; }
.gallery-grid svg { width: 22px; height: 20px; }
.gallery-scroll { width: 18px; display: flex; flex-direction: column; border-left: 1px solid #c4c5c4; }
.gs { flex: 1; display: flex; flex-direction: column; align-items: center; justify-content: center; gap: 2px; background: #f5f5f5; }
.gs-up { background: #e4e5e4; border-bottom: 1px solid #c9cac9; }
.gs-more { border-top: 1px solid #c9cac9; }
.gs-bar { width: 8px; height: 1.500px; background: #666; }

/* workspace */
.workspace { height: 741px; display: flex; background: #e6e7e6; overflow: hidden; }
.pane { width: 215px; flex: none; display: flex; border-right: 1px solid #d2d3d2; padding-right: 5px; }
.thumb-list { width: 189px; height: 741px; padding-top: 18.700px; overflow: hidden; flex: none; }
.thumb-row { height: 95.700px; display: flex; align-items: flex-start; }
.num { width: 29px; padding-right: 1px; text-align: right; font-size: 21.500px; line-height: 22px; margin-top: -6px; color: #5a5a5a; flex: none; }
.thumb-row-on .num { color: #e2724a; }
.thumb { width: 123.500px; height: 71px; margin-left: 8.700px; background: #fff; outline: 1px solid #c9cac9; }
.thumb > *:not(svg) { filter: blur(.4px); }
.thumb-on { outline: 4px solid #ee8250; outline-offset: 0; }
.pane-scroll { width: 20px; background: #dfe0df; flex: none; display: flex; flex-direction: column; padding: 3px 1px; }
.defs { position: absolute; }
.sbtn { height: 19px; background: #fff; border: 1px solid #c8c9c8; display: flex; align-items: center; justify-content: center; flex: none; }
.sthumb { height: 68px; margin-top: 416px; background: #fff; border: 1px solid #b5b6b5; flex: none; }
.sbtn-down { margin-top: auto; }

.stage { flex: 1; padding: 9px 0 0 149px; }
.slide { width: 1260px; height: 708px; background: #fdfefd; outline: 1px solid #d2d3d2; display: flex; flex-direction: column; }
.slide-head { height: 60px; border-bottom: 4.500px solid #128071; display: flex; align-items: flex-start; position: relative; }
.slide-mark { position: absolute; left: 1px; top: 0; overflow: visible; }
.slide-title { margin: 4px 0 0 94px; font-family: "Noto Sans CJK SC", sans-serif; font-size: 35px; font-weight: 700; line-height: 42px; color: #0a0a0a; white-space: nowrap; letter-spacing: -.2px; }
.slide-title-colon { font-family: "Noto Sans CJK TC", sans-serif; }
.slide-title-en { font-family: "Liberation Serif", serif; font-size: 31px; font-weight: 700; }
.brand { margin-left: auto; margin-right: 22.500px; margin-top: 9px; display: flex; align-items: center; gap: 7.500px; }
.brand-text { font-family: "Noto Sans CJK SC", sans-serif; font-size: 29px; letter-spacing: 3.500px; color: #17806f; font-weight: 700; line-height: 36px; }
.slide-canvas { flex: 1; position: relative; }
.flow { position: absolute; left: 0; top: 0; }
.outer { fill: none; stroke: #4c4c4c; stroke-width: 2.400; }
.wire { fill: none; stroke: #454545; stroke-width: 2.600; }
.head { fill: #3c3c3c; }
.box { stroke: #3f4a52; stroke-width: 2.600; }
.blue { fill: #9ccfff; }
.peach { fill: #fdd09b; stroke: #4a4a44; }
.pink { fill: #ffabcd; }
.lilac { fill: #ffadff; }
.labels text { font-family: "Noto Sans", "Noto Sans CJK SC", sans-serif; font-size: 18px; font-weight: 700; letter-spacing: 1.200px; fill: #3d4650; text-anchor: middle; dominant-baseline: central; }
.labels .cjk { letter-spacing: .6px; }
.labels .wide { letter-spacing: 1.300px; }
.labels .mark { fill: #444; letter-spacing: 0; }
.labels .eden { font-weight: 400; font-size: 16px; fill: #6a6a6a; letter-spacing: .3px; }
.spot { fill: #fff200; mix-blend-mode: multiply; }
.move { fill: #111; stroke: #fff; stroke-width: .5; }
.arrow { fill: #fff; stroke: #222; stroke-width: 1; }
.watermark { position: absolute; left: 951px; top: 598px; font-family: "Noto Sans CJK SC", sans-serif; font-size: 25.500px; letter-spacing: 2px; color: #e9eae9; font-style: italic; line-height: 32px; white-space: nowrap; font-weight: 700; }
.stage-rule { width: 1410px; margin-left: -149px; margin-top: 19px; height: 1px; background: #d6d7d6; }

.vscroll { width: 22px; flex: none; padding: 4px 2px 0 0; display: flex; flex-direction: column; align-items: center; position: relative; }
.vscroll .sbtn { width: 19px; }
.sthumb-main { width: 19px; height: 22px; margin-top: 412px; }
.sbtn-down2 { margin-top: 188px; }
.page-prev { margin-top: 8px; }
.page-next { margin-top: 13px; }

/* status */
.status { height: 28px; background: #f2f3f2; border-top: 1px solid #dcdddc; display: flex; align-items: center; font-size: 15.500px; color: #555; position: relative; }
.st-count { padding-left: 10px; width: 224px; letter-spacing: .5px; white-space: nowrap; }
.st-proof { flex: none; }
.st-lang { margin-left: 23px; }
.st-right { margin-left: auto; display: flex; align-items: stretch; height: 100%; padding-right: 9px; }
.st-btn { display: flex; align-items: center; }
.st-notes { gap: 7px; }
.st-comments { gap: 6px; margin-left: 28px; }
.view { display: flex; align-items: center; justify-content: center; width: 49px; }
.view-on { background: #c9cac9; margin-left: 24px; width: 50px; }
.view-grid { width: 50px; }
.ime { width: 195px; margin-left: 9px; padding-left: 2px; display: flex; align-items: center; background: #f4fafd; border: 1px solid #dbe4ea; border-bottom: 0; }
.ime-cell { width: 26.500px; display: flex; justify-content: center; align-items: center; flex: none; }
.ime-zh { color: #1e84d6; font-size: 21px; font-family: "Noto Sans CJK SC", sans-serif; }
.ime-punct { color: #3a8fd8; font-size: 17px; }
.st-plus { align-self: center; margin-left: 3px; }
.st-zoom { align-self: center; width: 42px; margin-left: 19px; }
.st-fit { align-self: center; margin-left: 18px; }
.st-arc { position: absolute; left: 17px; bottom: 0; }
```
